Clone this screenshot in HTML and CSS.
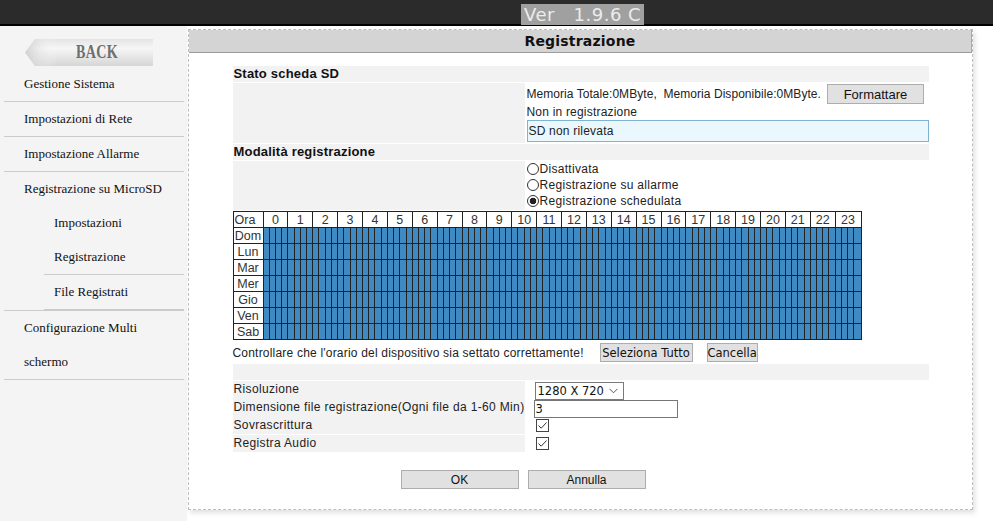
FILE: index.html
```html
<!DOCTYPE html>
<html lang="it">
<head>
<meta charset="utf-8">
<title>Registrazione</title>
<link rel="stylesheet" href="styles.css">
</head>
<body>
<header class="topbar"><span class="version">Ver   1.9.6 C</span></header>
<div class="layout">
  <nav class="sidebar">
    <a class="back">
      <svg class="back-shape" width="128" height="27" viewBox="0 0 128 27">
        <defs>
          <linearGradient id="bg" x1="0" y1="0" x2="0" y2="1">
            <stop offset="0" stop-color="#e4e4e4"/>
            <stop offset="0.35" stop-color="#f6f6f6"/>
            <stop offset="1" stop-color="#d6d6d6"/>
          </linearGradient>
          <linearGradient id="bh" x1="0" y1="0" x2="1" y2="0">
            <stop offset="0" stop-color="#c8c8c8" stop-opacity="0.8"/>
            <stop offset="0.25" stop-color="#ffffff" stop-opacity="0"/>
            <stop offset="1" stop-color="#ffffff" stop-opacity="0"/>
          </linearGradient>
        </defs>
        <polygon points="10,0 128,0 128,27 10,27 0,13.5" fill="url(#bg)"/>
        <polygon points="10,0 128,0 128,27 10,27 0,13.5" fill="url(#bh)"/>
      </svg>
      <span class="back-text">BACK</span>
    </a>
    <ul class="menu">
      <li><span class="item">Gestione Sistema</span></li>
      <li><span class="item">Impostazioni di Rete</span></li>
      <li><span class="item">Impostazione Allarme</span></li>
      <li><span class="item">Registrazione su MicroSD</span>
        <ul class="sub">
          <li class="plain"><span class="item">Impostazioni</span></li>
          <li><span class="item">Registrazione</span></li>
          <li><span class="item">File Registrati</span></li>
        </ul>
      </li>
      <li><span class="item">Configurazione Multi schermo</span></li>
    </ul>
  </nav>
  <main class="main">
    <section class="panel">
      <h1 class="panel-title">Registrazione</h1>
      <div class="content">
        <div class="sec">Stato scheda SD</div>
        <div class="row">
          <div class="lab"></div>
          <div class="val sd">
            <div class="mem"><span>Memoria Totale:0MByte,&nbsp; Memoria Disponibile:0MByte.</span><button class="btn fmt">Formattare</button></div>
            <div class="line">Non in registrazione</div>
            <div class="status">SD non rilevata</div>
          </div>
        </div>
        <div class="sec">Modalità registrazione</div>
        <div class="row">
          <div class="lab"></div>
          <div class="val radios">
            <label class="opt"><input type="radio" name="mode">Disattivata</label>
            <label class="opt"><input type="radio" name="mode">Registrazione su allarme</label>
            <label class="opt"><input type="radio" name="mode" checked>Registrazione schedulata</label>
          </div>
        </div>
        <table class="sched">
          <colgroup><col class="c-day"><col span="96"></colgroup>
          <tr class="hours"><th class="ora">Ora</th><th colspan="4">0</th><th colspan="4">1</th><th colspan="4">2</th><th colspan="4">3</th><th colspan="4">4</th><th colspan="4">5</th><th colspan="4">6</th><th colspan="4">7</th><th colspan="4">8</th><th colspan="4">9</th><th colspan="4">10</th><th colspan="4">11</th><th colspan="4">12</th><th colspan="4">13</th><th colspan="4">14</th><th colspan="4">15</th><th colspan="4">16</th><th colspan="4">17</th><th colspan="4">18</th><th colspan="4">19</th><th colspan="4">20</th><th colspan="4">21</th><th colspan="4">22</th><th colspan="4">23</th></tr>
          <tr><th>Dom</th>
<td></td><td></td><td></td><td></td><td></td><td></td><td></td><td></td><td></td><td></td><td></td><td></td><td></td><td></td><td></td><td></td>
<td></td><td></td><td></td><td></td><td></td><td></td><td></td><td></td><td></td><td></td><td></td><td></td><td></td><td></td><td></td><td></td>
<td></td><td></td><td></td><td></td><td></td><td></td><td></td><td></td><td></td><td></td><td></td><td></td><td></td><td></td><td></td><td></td>
<td></td><td></td><td></td><td></td><td></td><td></td><td></td><td></td><td></td><td></td><td></td><td></td><td></td><td></td><td></td><td></td>
<td></td><td></td><td></td><td></td><td></td><td></td><td></td><td></td><td></td><td></td><td></td><td></td><td></td><td></td><td></td><td></td>
<td></td><td></td><td></td><td></td><td></td><td></td><td></td><td></td><td></td><td></td><td></td><td></td><td></td><td></td><td></td><td></td>
</tr>
          <tr><th>Lun</th>
<td></td><td></td><td></td><td></td><td></td><td></td><td></td><td></td><td></td><td></td><td></td><td></td><td></td><td></td><td></td><td></td>
<td></td><td></td><td></td><td></td><td></td><td></td><td></td><td></td><td></td><td></td><td></td><td></td><td></td><td></td><td></td><td></td>
<td></td><td></td><td></td><td></td><td></td><td></td><td></td><td></td><td></td><td></td><td></td><td></td><td></td><td></td><td></td><td></td>
<td></td><td></td><td></td><td></td><td></td><td></td><td></td><td></td><td></td><td></td><td></td><td></td><td></td><td></td><td></td><td></td>
<td></td><td></td><td></td><td></td><td></td><td></td><td></td><td></td><td></td><td></td><td></td><td></td><td></td><td></td><td></td><td></td>
<td></td><td></td><td></td><td></td><td></td><td></td><td></td><td></td><td></td><td></td><td></td><td></td><td></td><td></td><td></td><td></td>
</tr>
          <tr><th>Mar</th>
<td></td><td></td><td></td><td></td><td></td><td></td><td></td><td></td><td></td><td></td><td></td><td></td><td></td><td></td><td></td><td></td>
<td></td><td></td><td></td><td></td><td></td><td></td><td></td><td></td><td></td><td></td><td></td><td></td><td></td><td></td><td></td><td></td>
<td></td><td></td><td></td><td></td><td></td><td></td><td></td><td></td><td></td><td></td><td></td><td></td><td></td><td></td><td></td><td></td>
<td></td><td></td><td></td><td></td><td></td><td></td><td></td><td></td><td></td><td></td><td></td><td></td><td></td><td></td><td></td><td></td>
<td></td><td></td><td></td><td></td><td></td><td></td><td></td><td></td><td></td><td></td><td></td><td></td><td></td><td></td><td></td><td></td>
<td></td><td></td><td></td><td></td><td></td><td></td><td></td><td></td><td></td><td></td><td></td><td></td><td></td><td></td><td></td><td></td>
</tr>
          <tr><th>Mer</th>
<td></td><td></td><td></td><td></td><td></td><td></td><td></td><td></td><td></td><td></td><td></td><td></td><td></td><td></td><td></td><td></td>
<td></td><td></td><td></td><td></td><td></td><td></td><td></td><td></td><td></td><td></td><td></td><td></td><td></td><td></td><td></td><td></td>
<td></td><td></td><td></td><td></td><td></td><td></td><td></td><td></td><td></td><td></td><td></td><td></td><td></td><td></td><td></td><td></td>
<td></td><td></td><td></td><td></td><td></td><td></td><td></td><td></td><td></td><td></td><td></td><td></td><td></td><td></td><td></td><td></td>
<td></td><td></td><td></td><td></td><td></td><td></td><td></td><td></td><td></td><td></td><td></td><td></td><td></td><td></td><td></td><td></td>
<td></td><td></td><td></td><td></td><td></td><td></td><td></td><td></td><td></td><td></td><td></td><td></td><td></td><td></td><td></td><td></td>
</tr>
          <tr><th>Gio</th>
<td></td><td></td><td></td><td></td><td></td><td></td><td></td><td></td><td></td><td></td><td></td><td></td><td></td><td></td><td></td><td></td>
<td></td><td></td><td></td><td></td><td></td><td></td><td></td><td></td><td></td><td></td><td></td><td></td><td></td><td></td><td></td><td></td>
<td></td><td></td><td></td><td></td><td></td><td></td><td></td><td></td><td></td><td></td><td></td><td></td><td></td><td></td><td></td><td></td>
<td></td><td></td><td></td><td></td><td></td><td></td><td></td><td></td><td></td><td></td><td></td><td></td><td></td><td></td><td></td><td></td>
<td></td><td></td><td></td><td></td><td></td><td></td><td></td><td></td><td></td><td></td><td></td><td></td><td></td><td></td><td></td><td></td>
<td></td><td></td><td></td><td></td><td></td><td></td><td></td><td></td><td></td><td></td><td></td><td></td><td></td><td></td><td></td><td></td>
</tr>
          <tr><th>Ven</th>
<td></td><td></td><td></td><td></td><td></td><td></td><td></td><td></td><td></td><td></td><td></td><td></td><td></td><td></td><td></td><td></td>
<td></td><td></td><td></td><td></td><td></td><td></td><td></td><td></td><td></td><td></td><td></td><td></td><td></td><td></td><td></td><td></td>
<td></td><td></td><td></td><td></td><td></td><td></td><td></td><td></td><td></td><td></td><td></td><td></td><td></td><td></td><td></td><td></td>
<td></td><td></td><td></td><td></td><td></td><td></td><td></td><td></td><td></td><td></td><td></td><td></td><td></td><td></td><td></td><td></td>
<td></td><td></td><td></td><td></td><td></td><td></td><td></td><td></td><td></td><td></td><td></td><td></td><td></td><td></td><td></td><td></td>
<td></td><td></td><td></td><td></td><td></td><td></td><td></td><td></td><td></td><td></td><td></td><td></td><td></td><td></td><td></td><td></td>
</tr>
          <tr><th>Sab</th>
<td></td><td></td><td></td><td></td><td></td><td></td><td></td><td></td><td></td><td></td><td></td><td></td><td></td><td></td><td></td><td></td>
<td></td><td></td><td></td><td></td><td></td><td></td><td></td><td></td><td></td><td></td><td></td><td></td><td></td><td></td><td></td><td></td>
<td></td><td></td><td></td><td></td><td></td><td></td><td></td><td></td><td></td><td></td><td></td><td></td><td></td><td></td><td></td><td></td>
<td></td><td></td><td></td><td></td><td></td><td></td><td></td><td></td><td></td><td></td><td></td><td></td><td></td><td></td><td></td><td></td>
<td></td><td></td><td></td><td></td><td></td><td></td><td></td><td></td><td></td><td></td><td></td><td></td><td></td><td></td><td></td><td></td>
<td></td><td></td><td></td><td></td><td></td><td></td><td></td><td></td><td></td><td></td><td></td><td></td><td></td><td></td><td></td><td></td>
</tr>
        </table>
        <div class="note">
          <span class="note-text">Controllare che l'orario del dispositivo sia settato correttamente!</span>
          <button class="btn tbtn sel">Seleziona Tutto</button>
          <button class="btn tbtn canc">Cancella</button>
        </div>
        <div class="spacer"></div>
        <div class="row set">
          <div class="lab">Risoluzione</div>
          <div class="val"><span class="select">1280 X 720<svg class="chev" width="9" height="6" viewBox="0 0 9 6"><polyline points="0.5,0.8 4.5,4.8 8.5,0.8" fill="none" stroke="#555" stroke-width="1"/></svg></span></div>
        </div>
        <div class="row set">
          <div class="lab">Dimensione file registrazione(Ogni file da 1-60 Min)</div>
          <div class="val"><span class="field">3</span></div>
        </div>
        <div class="row set">
          <div class="lab">Sovrascrittura</div>
          <div class="val"><svg class="check" width="13" height="13" viewBox="0 0 13 13"><rect x="0.5" y="0.5" width="12" height="12" fill="#fff" stroke="#444"/><polyline points="2.5,6.5 5.2,9.2 10.5,3.5" fill="none" stroke="#333" stroke-width="1"/></svg></div>
        </div>
        <div class="row set">
          <div class="lab">Registra Audio</div>
          <div class="val"><svg class="check" width="13" height="13" viewBox="0 0 13 13"><rect x="0.5" y="0.5" width="12" height="12" fill="#fff" stroke="#444"/><polyline points="2.5,6.5 5.2,9.2 10.5,3.5" fill="none" stroke="#333" stroke-width="1"/></svg></div>
        </div>
        <div class="actions">
          <button class="btn act">OK</button>
          <button class="btn act">Annulla</button>
        </div>
      </div>
    </section>
  </main>
</div>
</body>
</html>
```

FILE: styles.css
```css
html, body {
  margin: 0;
  padding: 0;
  background: #fff;
}

body {
  font-family: "Liberation Sans", Arial, sans-serif;
  font-size: 12px;
  color: #222;
  width: 993px;
  height: 521px;
  overflow: hidden;
}

/* top bar */
.topbar {
  height: 24px;
  background: #2b2b2b;
  border-bottom: 2px solid #000;
  padding-left: 521px;
}

.version {
  display: inline-block;
  margin-top: 4px;
  height: 21px;
  line-height: 21px;
  padding: 0 3px 0 3px;
  background: #a0a0a0;
  color: #ececec;
  font-family: "DejaVu Sans", Verdana, sans-serif;
  font-size: 18px;
  letter-spacing: 0.5px;
  white-space: pre;
  position: relative;
}

/* layout */
.layout {
  display: flex;
  height: 495px;
}

.sidebar {
  width: 187px;
  flex-shrink: 0;
  background: #f4f4f4;
  padding-top: 13px;
  box-sizing: border-box;
  font-family: "Liberation Serif", "Times New Roman", serif;
  font-size: 13px;
  color: #111;
}

.back {
  position: relative;
  display: flex;
  align-items: center;
  width: 128px;
  height: 27px;
  margin-left: 25px;
}

.back-shape {
  position: absolute;
  left: 0;
  top: 0;
}

.back-text {
  position: relative;
  display: inline-block;
  margin-left: 51px;
  font-size: 18px;
  font-weight: bold;
  color: #6e6e6e;
  letter-spacing: 0.5px;
  transform: scaleX(0.78);
  transform-origin: left center;
  line-height: 27px;
}

.menu {
  list-style: none;
  margin: 1px 0 0;
  padding: 0;
}

.menu > li {
  margin: 0 3px 0 4px;
  border-bottom: 1px solid #cbcbcb;
}

.menu .item {
  display: block;
  padding: 0 10px 0 20px;
  line-height: 34px;
}

.sub {
  list-style: none;
  margin: 0;
  padding: 0;
}

.sub li {
  margin-left: 40px;
  border-bottom: 1px solid #cbcbcb;
}

.sub li.plain {
  border-bottom: none;
}

.sub .item {
  padding-left: 10px;
}

/* main panel */
.main {
  flex: 1;
  padding: 3px 0 0 1px;
  background: #fff;
}

.panel {
  width: 785px;
  height: 481px;
  box-sizing: border-box;
  border: 1px dashed #bdbdbd;
  box-shadow: 2px 3px 5px rgba(0, 0, 0, 0.12);
  background: #fff;
}

.panel-title {
  margin: 0;
  height: 22px;
  line-height: 22px;
  background: #d4d4d4;
  border-bottom: 1px solid #9c9c9c;
  border-right: 1px solid #a8a8a8;
  text-align: center;
  font-family: "DejaVu Sans", Verdana, sans-serif;
  font-size: 14px;
  font-weight: bold;
  color: #111;
  letter-spacing: 0.2px;
}

.content {
  width: 696px;
  margin: 13px auto 0;
  letter-spacing: 0.2px;
}

.sec {
  background: #f2f2f2;
  font-weight: bold;
  font-size: 13px;
  color: #111;
  height: 16px;
  line-height: 16px;
  padding-left: 1px;
  margin-bottom: 1px;
}

.row {
  display: grid;
  grid-template-columns: 292px 1fr;
  column-gap: 1px;
  margin-bottom: 1px;
}

.lab {
  background: #f2f2f2;
}

.val {
  padding-left: 1px;
}

.sd {
  padding-bottom: 1px;
}

.mem {
  display: flex;
  align-items: center;
  height: 20px;
  padding-top: 1px;
  white-space: nowrap;
  letter-spacing: 0.05px;
}

.btn {
  font-family: "Liberation Sans", Arial, sans-serif;
  font-size: 12px;
  color: #111;
  background: #e1e1e1;
  border: 1px solid #adadad;
  padding: 0;
  margin: 0;
  box-sizing: border-box;
  letter-spacing: 0;
}

.fmt {
  margin-left: 6px;
  width: 97px;
  height: 20px;
  font-size: 13px;
}

.line {
  height: 16px;
  line-height: 16px;
}

.status {
  height: 22px;
  box-sizing: border-box;
  border: 1px solid #7fb3d0;
  background: #eaf8fd;
  line-height: 20px;
  padding-left: 1px;
}

.radios {
  padding-bottom: 1px;
}

.opt {
  display: flex;
  align-items: center;
  height: 16px;
  letter-spacing: 0.3px;
}

.opt input {
  appearance: none;
  -webkit-appearance: none;
  width: 12px;
  height: 12px;
  margin: 0 1px 0 0;
  border: 1px solid #333;
  border-radius: 50%;
  background: #fff;
  box-sizing: border-box;
}

.opt input:checked {
  background: radial-gradient(circle, #222 0 3px, #fff 3.6px);
}

/* schedule grid */
.sched {
  border-collapse: collapse;
  table-layout: fixed;
  width: 629px;
  margin-top: 1px;
  border: 1px solid #111;
  letter-spacing: 0;
}

.c-day {
  width: 30px;
}

.sched tr {
  height: 16px;
}

.sched th,
.sched td {
  border: 1px solid #222;
  padding: 0;
  height: 15px;
}

.sched td {
  background: #3f8ac3;
}

.sched th {
  background: #fff;
  font-weight: normal;
  font-size: 12.5px;
  color: #333;
  line-height: 14px;
  text-align: center;
  overflow: hidden;
  white-space: nowrap;
}

.sched th.ora {
  text-align: left;
  padding-left: 1px;
}

/* note row */
.note {
  display: flex;
  align-items: center;
  height: 21px;
  margin-top: 2px;
}

.note-text {
  width: 367px;
  flex-shrink: 0;
}

.tbtn {
  font-family: "DejaVu Sans", Verdana, sans-serif;
  font-size: 11.5px;
  height: 19px;
}

.sel {
  width: 93px;
}

.canc {
  width: 51px;
  margin-left: 14px;
}

.spacer {
  height: 16px;
  background: #f2f2f2;
  margin: 1px 0 1px;
}

/* settings rows */
.set {
  height: 17px;
}

.set .lab {
  line-height: 17px;
  padding-left: 1px;
  white-space: nowrap;
  letter-spacing: 0.35px;
}

.set .val {
  padding-left: 9px;
  display: flex;
  align-items: center;
}

.select {
  display: inline-flex;
  align-items: center;
  justify-content: space-between;
  width: 89px;
  height: 18px;
  box-sizing: border-box;
  border: 1px solid #7a7a7a;
  background: #fff;
  padding: 0 5px 0 2px;
  font-family: "DejaVu Sans", Verdana, sans-serif;
  font-size: 11.5px;
  letter-spacing: 0;
  color: #111;
  margin-top: 1px;
}

.field {
  display: inline-block;
  width: 144px;
  height: 18px;
  box-sizing: border-box;
  border: 1px solid #767676;
  background: #fff;
  padding-left: 1px;
  line-height: 16px;
  font-family: "DejaVu Sans", Verdana, sans-serif;
  font-size: 11.5px;
  color: #111;
  margin-top: 1px;
  margin-left: -1px;
}

.check {
  display: block;
  margin-left: 1px;
}

.actions {
  display: flex;
  gap: 9px;
  padding-left: 168px;
  margin-top: 18px;
}

.act {
  width: 118px;
  height: 19px;
}
```
